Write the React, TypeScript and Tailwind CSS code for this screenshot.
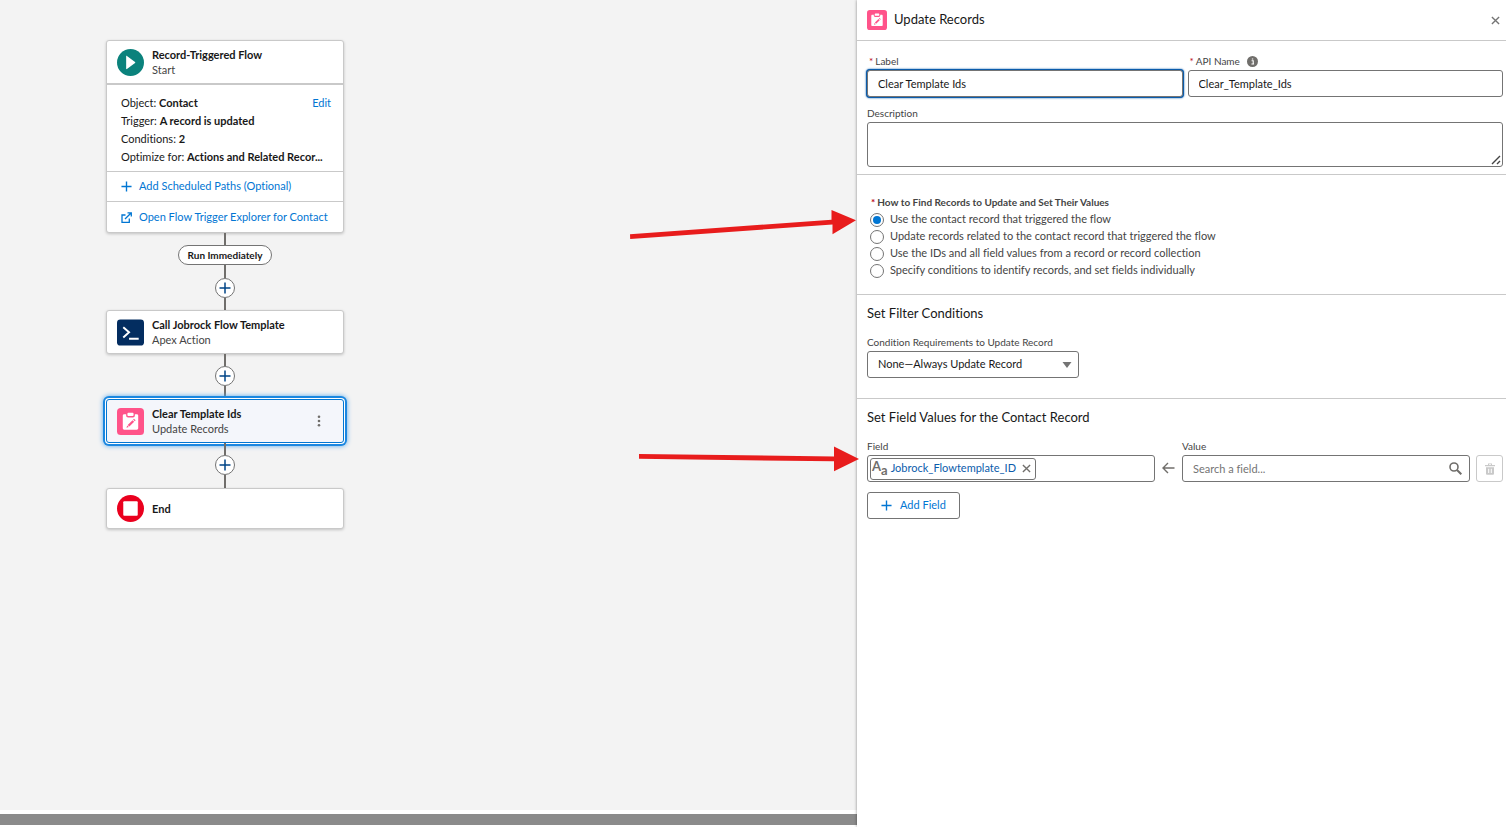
import React, { useState } from 'react';

const RECORD_OPTIONS = [
  'Use the contact record that triggered the flow',
  'Update records related to the contact record that triggered the flow',
  'Use the IDs and all field values from a record or record collection',
  'Specify conditions to identify records, and set fields individually',
];

const PlusIcon: React.FC<{ className?: string }> = ({ className }) => (
  <svg viewBox="0 0 12 12" className={className} fill="none" stroke="currentColor" strokeWidth="1.5">
    <path d="M6 .5v11M.5 6h11" />
  </svg>
);

const CloseIcon: React.FC<{ className?: string }> = ({ className }) => (
  <svg viewBox="0 0 10 10" className={className} fill="none" stroke="currentColor" strokeWidth="1.5">
    <path d="M1 1l8 8M9 1L1 9" />
  </svg>
);

const UpdateIcon: React.FC<{ className?: string }> = ({ className }) => (
  <svg viewBox="0 0 28 28" className={className}>
    <rect width="28" height="28" rx="4" fill="#ff538a" />
    <path
      d="M7.500 6.500h2v1.300c0 1.200.8 2 2 2h5c1.200 0 2-.8 2-2V6.500h2c.9 0 1.500.6 1.500 1.500v13c0 .9-.6 1.500-1.500 1.500h-13c-.9 0-1.500-.6-1.500-1.500V8c0-.9.6-1.500 1.500-1.500z"
      fill="#fff"
    />
    <path d="M11.800 5h4.400c.6 0 1 .4 1 1v1.200c0 .6-.4 1-1 1h-4.400c-.6 0-1-.4-1-1V6c0-.6.4-1 1-1z" fill="#fff" />
    <path d="M11.100 17.600l5-5 1.700 1.700-5 5zM16.700 12l.9-.9 1.700 1.700-.9.9zM9.800 20.600l.8-2.500 1.700 1.700z" fill="#ff538a" />
  </svg>
);

const StartIcon = () => (
  <svg viewBox="0 0 28 28" className="size-[27px] shrink-0">
    <circle cx="14" cy="14" r="14" fill="#0b827c" />
    <path d="M9.500 7.500v13c0 .5.4.6.8.3l8.400-6.200c.4-.3.4-.9 0-1.200l-8.400-6.200c-.4-.3-.8-.2-.8.3z" fill="#fff" />
  </svg>
);

const ApexIcon = () => (
  <svg viewBox="0 0 28 28" className="size-[27px] shrink-0">
    <rect y=".5" width="28" height="27" rx="3.500" fill="#032d60" />
    <path d="M6.500 8.500l6 5.300-6 5.300M12.500 20.500h10" fill="none" stroke="#fff" strokeWidth="2" />
  </svg>
);

const EndIcon = () => (
  <svg viewBox="0 0 28 28" className="size-[27px] shrink-0">
    <circle cx="14" cy="14" r="14" fill="#ea001e" />
    <rect x="6.500" y="6.500" width="15" height="15" rx="1" fill="#fff" />
  </svg>
);

const Line: React.FC<{ className: string }> = ({ className }) => <div className={`w-0.5 bg-[#706e6b] ${className}`} />;

const AddNode = () => (
  <button
    aria-label="Add element"
    className="size-5 rounded-full border border-[#747474] bg-white flex items-center justify-center text-[#014486]"
  >
    <PlusIcon className="size-3" />
  </button>
);

interface NodeProps {
  icon: React.ReactNode;
  title: string;
  subtitle?: string;
}

const NodeText: React.FC<NodeProps> = ({ icon, title, subtitle }) => (
  <>
    {icon}
    <div className="ml-2 flex-1 leading-[15px]">
      <div className="font-bold text-[#181818]">{title}</div>
      {subtitle && <div className="text-[#444]">{subtitle}</div>}
    </div>
  </>
);

const cardClass = 'w-full rounded-[3px] border border-[#c9c9c9] bg-white shadow-[0_1px_3px_rgba(0,0,0,0.2)]';
const labelClass = 'mb-[3px] text-[10px] leading-3 text-[#444]';
const inputClass = 'h-[27px] w-full rounded-[3px] border border-[#747474] bg-white px-2.5 text-[#181818] outline-none';

const StartCard = () => (
  <section className={cardClass}>
    <div className="flex h-11 items-center border-b-2 border-[#c9c9c9] pl-2.5">
      <NodeText icon={<StartIcon />} title="Record-Triggered Flow" subtitle="Start" />
    </div>
    <div className="whitespace-nowrap pb-[5px] pl-3.5 pr-3 pt-[9px] leading-[18px] text-[#181818]">
      <div className="flex justify-between">
        <p>Object: <b>Contact</b></p>
        <a href="#edit" className="text-[#0176d3]">Edit</a>
      </div>
      <p>Trigger: <b>A record is updated</b></p>
      <p>Conditions: <b>2</b></p>
      <p>Optimize for: <b>Actions and Related Recor...</b></p>
    </div>
    <a href="#paths" className="flex h-[30px] items-center gap-[7px] border-t border-[#c9c9c9] pl-3.5 text-[#0176d3]">
      <PlusIcon className="size-[11px]" />
      Add Scheduled Paths (Optional)
    </a>
    <a href="#explorer" className="flex h-[31px] items-center gap-[7px] border-t border-[#c9c9c9] pl-3.5 text-[#0176d3]">
      <svg viewBox="0 0 11 11" className="size-[11px]" fill="none" stroke="currentColor" strokeWidth="1.300">
        <path d="M4.500 3H1v7.300h7.300V6.500M4 7l5.800-5.800M6.500.8h3.800v3.800" />
      </svg>
      Open Flow Trigger Explorer for Contact
    </a>
  </section>
);

const FlowCanvas = () => (
  <main className="flex min-w-0 flex-1 flex-col bg-[#f3f3f3]">
    <div className="flex-1">
      <div className="ml-[106px] mt-10 flex w-[238px] flex-col items-center">
        <StartCard />
        <Line className="h-3" />
        <span className="flex h-5 items-center rounded-full border border-[#747474] bg-white px-[9px] text-[10px] font-bold text-[#181818]">
          Run Immediately
        </span>
        <Line className="h-[13px]" />
        <AddNode />
        <Line className="h-3" />
        <section className={`${cardClass} flex h-11 items-center pl-2.5`}>
          <NodeText icon={<ApexIcon />} title="Call Jobrock Flow Template" subtitle="Apex Action" />
        </section>
        <Line className="h-3" />
        <AddNode />
        <Line className="h-[13px]" />
        <section className="flex h-11 w-full items-center rounded-[3px] border border-[#0176d3] bg-[#f4f6fb] pl-2.5 shadow-[0_0_0_1px_#fff,0_0_0_3px_#1b87e0,0_0_5px_3px_#57a8ec]">
          <NodeText icon={<UpdateIcon className="size-[27px] shrink-0" />} title="Clear Template Ids" subtitle="Update Records" />
          <button aria-label="More actions" className="mr-[22px]">
            <svg viewBox="0 0 4 12" className="h-3 w-1" fill="#706e6b">
              <circle cx="2" cy="1.800" r="1.300" />
              <circle cx="2" cy="6" r="1.300" />
              <circle cx="2" cy="10.200" r="1.300" />
            </svg>
          </button>
        </section>
        <Line className="h-3" />
        <AddNode />
        <Line className="h-[13px]" />
        <section className={`${cardClass} flex h-[41px] items-center pl-2.5`}>
          <NodeText icon={<EndIcon />} title="End" />
        </section>
      </div>
    </div>
    <div className="h-[17px] border-b-2 border-t-4 border-white bg-[#8b8b8b]" />
  </main>
);

const UpdateRecordsPanel = () => {
  const [selected, setSelected] = useState(0);

  return (
    <aside className="w-[649px] shrink-0 bg-white shadow-[0_0_3px_rgba(0,0,0,0.45)]">
      <header className="flex h-[41px] items-center border-b border-[#c9c9c9] pl-2.5 pr-1.5">
        <UpdateIcon className="size-5" />
        <h2 className="ml-[7px] flex-1 text-[13px] text-[#181818]">Update Records</h2>
        <button aria-label="Close" className="text-[#747474]">
          <CloseIcon className="size-[9px]" />
        </button>
      </header>

      <section className="border-b border-[#c9c9c9] pb-[7px] pl-2.5 pr-[3px] pt-3.5">
        <div className="flex gap-[5px]">
          <div className="flex-1">
            <label htmlFor="label" className={`${labelClass} block`}>
              <span className="mx-0.5 text-[#ba0517]">*</span>Label
            </label>
            <input
              id="label"
              defaultValue="Clear Template Ids"
              className={`${inputClass} block shadow-[0_0_0_1px_#0b5cab,0_0_2px_1px_#0b5cab]`}
            />
          </div>
          <div className="flex-1">
            <div className={`${labelClass} flex items-center`}>
              <label htmlFor="api-name">
                <span className="mx-0.5 text-[#ba0517]">*</span>API Name
              </label>
              <svg viewBox="0 0 12 12" className="ml-[7px] size-[11px]">
                <circle cx="6" cy="6" r="6" fill="#706e6b" />
                <path d="M5 5.200h1.800v3.600M4.800 8.800h2.900M5.300 3.300h1.500" stroke="#fff" strokeWidth="1.200" fill="none" />
              </svg>
            </div>
            <input id="api-name" defaultValue="Clear_Template_Ids" className={`${inputClass} block`} />
          </div>
        </div>
        <label htmlFor="description" className={`${labelClass} mt-2.5 block`}>Description</label>
        <div className="relative">
          <textarea
            id="description"
            className="block h-[45px] w-full resize-none rounded-[3px] border border-[#747474] px-2.5 outline-none"
          />
          <svg viewBox="0 0 10 10" className="absolute bottom-0.5 right-0.5 size-2.5" stroke="#444" strokeWidth="1.400">
            <path d="M1 9l8-8M6 9l3-3" />
          </svg>
        </div>
      </section>

      <section className="border-b border-[#c9c9c9] pb-[15px] pl-3.5 pt-[19px]">
        <fieldset>
          <legend className="text-[10px] font-bold leading-[17px] text-[#444]">
            <span className="mr-0.5 text-[#ba0517]">*</span>How to Find Records to Update and Set Their Values
          </legend>
          {RECORD_OPTIONS.map((option, i) => (
            <label key={option} className="-ml-px flex h-[17px] items-center gap-1.5 text-[#444]">
              <input
                type="radio"
                name="record-option"
                checked={selected === i}
                onChange={() => setSelected(i)}
                className="flex size-3.5 appearance-none items-center justify-center rounded-full border border-[#747474] before:size-2 before:rounded-full checked:before:bg-[#0176d3]"
              />
              {option}
            </label>
          ))}
        </fieldset>
      </section>

      <section className="border-b border-[#c9c9c9] px-2.5 pb-5 pt-2">
        <h3 className="text-[13px] leading-5 text-[#181818]">Set Filter Conditions</h3>
        <label htmlFor="condition" className={`${labelClass} mt-[13px] block`}>
          Condition Requirements to Update Record
        </label>
        <div className="relative w-[212px]">
          <select id="condition" className={`${inputClass} block appearance-none`}>
            <option>None—Always Update Record</option>
          </select>
          <svg viewBox="0 0 10 6" className="pointer-events-none absolute right-[7px] top-[11px] h-1.5 w-2.5" fill="#747474">
            <path d="M.5 0h9L5 6z" />
          </svg>
        </div>
      </section>

      <section className="pl-2.5 pr-[3px] pt-2">
        <h3 className="text-[13px] leading-5 text-[#181818]">Set Field Values for the Contact Record</h3>
        <div className="mt-[13px] flex items-end">
          <div className="min-w-0 flex-1">
            <label htmlFor="field" className={`${labelClass} block`}>Field</label>
            <div className="flex h-[27px] items-center rounded-[3px] border border-[#747474] px-0.5">
              <span className="flex h-[22px] shrink-0 items-center rounded-[3px] border border-[#747474] pl-px pr-1 text-[#0b5cab]">
                <span className="flex items-center text-[13px] font-bold leading-none text-[#706e6b]">
                  <span className="pb-1">A</span>
                  <span className="pt-1">a</span>
                </span>
                <span className="ml-[3px]">Jobrock_Flowtemplate_ID</span>
                <button aria-label="Remove field" className="ml-1.5 text-[#706e6b]">
                  <CloseIcon className="size-[9px]" />
                </button>
              </span>
              <input id="field" className="min-w-0 flex-1 outline-none" />
            </div>
          </div>
          <svg viewBox="0 0 13 12" className="mx-[7px] mb-2 h-3 w-[13px]" fill="none" stroke="#706e6b" strokeWidth="1.400">
            <path d="M12.500 6H1M6 1L1 6l5 5" />
          </svg>
          <div className="min-w-0 flex-1">
            <label htmlFor="value" className={`${labelClass} block`}>Value</label>
            <div className="relative">
              <input id="value" placeholder="Search a field..." className={`${inputClass} block placeholder:text-[#747474]`} />
              <svg viewBox="0 0 13 13" className="absolute right-2 top-[7px] size-[13px]" fill="none" stroke="#706e6b">
                <circle cx="5" cy="5" r="4" strokeWidth="1.600" />
                <path d="M8 8l4.300 4.300" strokeWidth="2" />
              </svg>
            </div>
          </div>
          <button
            aria-label="Delete row"
            disabled
            className="ml-1.5 flex size-[27px] items-center justify-center rounded-[3px] border border-[#c9c9c9]"
          >
            <svg viewBox="0 0 10 12" className="h-3 w-2.5" fill="#c9c9c9">
              <path d="M3 .5h4V2h3v1.300H0V2h3zM4 1.300V2h2v-.7zM1 4.200h8v6.200c0 .8-.5 1.300-1.300 1.300H2.300c-.8 0-1.300-.5-1.300-1.300zM3.200 5.700v4.400h1V5.700zm2.600 0v4.400h1V5.700z" fillRule="evenodd" />
            </svg>
          </button>
        </div>
        <button className="mt-2.5 flex h-[27px] items-center gap-2 rounded-[3px] border border-[#747474] px-[13px] text-[#0176d3]">
          <PlusIcon className="size-[11px]" />
          Add Field
        </button>
      </section>
    </aside>
  );
};

export default function App() {
  return (
    <div className="relative flex min-h-screen bg-white font-[Lato,sans-serif] text-[11px] [font-variant-ligatures:none]">
      <FlowCanvas />
      <UpdateRecordsPanel />
      {/* callout arrows pointing at the selected option and the field */}
      <svg viewBox="0 0 230 264" className="pointer-events-none absolute right-[646px] top-[209px] h-[264px] w-[230px]" fill="#e81c1c">
        <path d="M0 25.200L201.500 10.800V1L226 11.200 202.500 25.300V15.500L.2 30z" />
        <path d="M9 245l195 2.500v-10L229 250l-25 12.300v-10L9 249.800z" />
      </svg>
    </div>
  );
}
